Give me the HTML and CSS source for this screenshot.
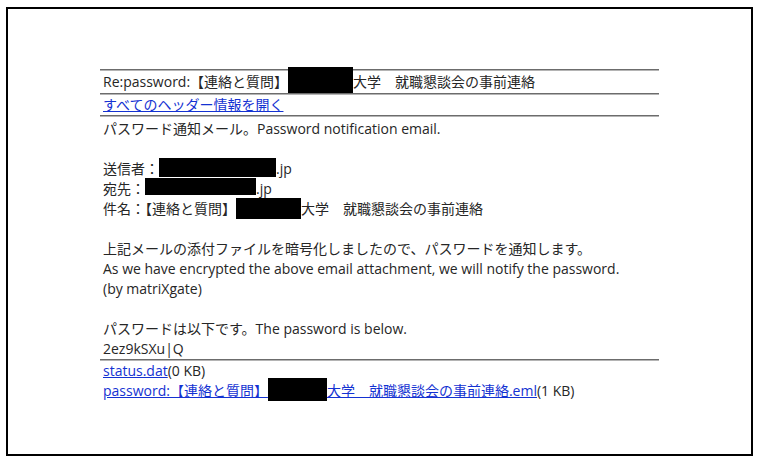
FILE: index.html
```html
<html>
    <head>
        <meta charset="utf-8">
        <title>Re:password</title>
        <link rel="stylesheet" href="styles.css">
    </head>
    <body>
        <!-- Rammen rundt hele e-posten -->
        <div class="frame">
            <div class="mail">
                <div class="rule"></div>
                <div class="subject">Re:password:【連絡と質問】<span class="mask mask-subject"></span>大学　就職懇談会の事前連絡</div>
                <div class="rule"></div>
                <div class="headers"><a href="#">すべてのヘッダー情報を開く</a></div>
                <div class="rule"></div>

                <div class="body">
                    <p>パスワード通知メール。Password notification email.</p>

                    <p>送信者：<span class="mask mask-from"></span>.jp<br>
                    宛先：<span class="mask mask-to"></span>.jp<br>
                    件名：【連絡と質問】<span class="mask mask-title"></span>大学　就職懇談会の事前連絡</p>

                    <p>上記メールの添付ファイルを暗号化しましたので、パスワードを通知します。<br>
                    As we have encrypted the above email attachment, we will notify the password.<br>
                    (by matriXgate)</p>

                    <p class="last">パスワードは以下です。The password is below.<br>
                    2ez9kSXu|Q</p>
                </div>

                <div class="rule"></div>
                <div class="files">
                    <div><a href="#">status.dat</a>(0 KB)</div>
                    <div><a href="#">password:【連絡と質問】<span class="mask mask-file"></span>大学　就職懇談会の事前連絡.eml</a>(1 KB)</div>
                </div>
            </div>
        </div>
    </body>
</html>
```

FILE: styles.css
```css
/* Hele siden er hvit, uten marg */
body {
    margin: 0;
    background-color: #fff;
    font-family: "Open Sans", "Noto Sans CJK JP", sans-serif;
    font-size: 14px;
    color: #262626;
}

/* Den svarte rammen */
.frame {
    margin: 7px 0 0 6px;
    width: 743px;
    height: 445px;
    border: 2px solid #000;
}

.mail {
    margin: 60px 0 0 92px;
    width: 559px;
}

/* Grå skillelinje */
.rule {
    height: 0;
    border-top: 1px solid #6c6c6c;
    border-bottom: 1px solid #b4b4b4;
}

.subject {
    height: 22px;
    line-height: 22px;
    padding-left: 3px;
}

.headers {
    height: 20px;
    line-height: 20px;
    padding-left: 3px;
}

a {
    color: #1432d2;
    text-decoration: underline;
}

.body {
    padding: 2px 0 0 3px;
    line-height: 20px;
}

.body p {
    margin: 0 0 20px 0;
}

.body p.last {
    margin-bottom: 0;
}

.files {
    padding-left: 3px;
    line-height: 20px;
}

/* Sladdede felter */
.mask {
    display: inline-block;
    background-color: #000;
    vertical-align: top;
}

.mask-subject {
    width: 65px;
    height: 26px;
    margin: -4px 0 -4px 0;
}

.mask-from {
    width: 117px;
    height: 19px;
    margin: -1px 0 -1px 0;
}

.mask-to {
    width: 111px;
    height: 17px;
    margin: -1px 0 -1px 0;
}

.mask-title {
    width: 65px;
    height: 21px;
    margin: -1px 0 -1px 0;
}

.mask-file {
    width: 59px;
    height: 23px;
    margin: -3px 0 -3px 0;
}
```
